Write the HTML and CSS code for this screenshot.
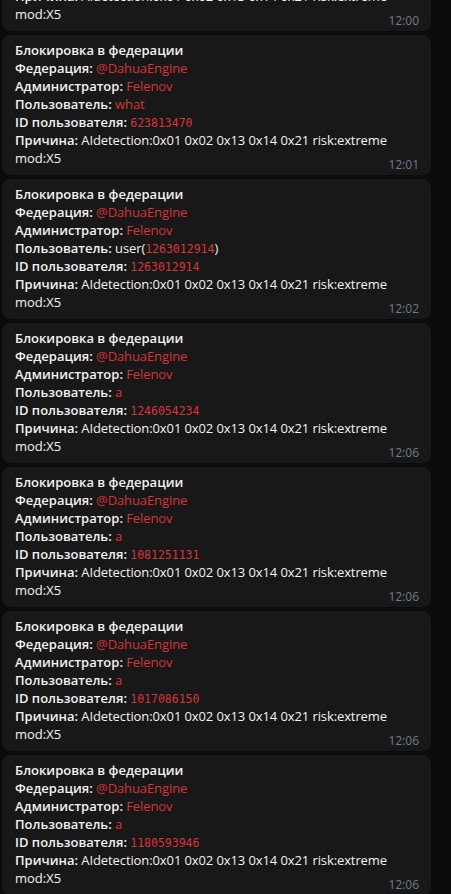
FILE: index.html
```html
<!DOCTYPE html>
<html>
<head>
<meta charset="utf-8">
<title>Федерация</title>
<link rel="stylesheet" href="styles.css">
</head>

<body>
<div class="feed">

    <div class="msg">
        <div class="line b">Блокировка в федерации</div>
        <div class="line"><b>Федерация:</b> <span class="red">@DahuaEngine</span></div>
        <div class="line"><b>Администратор:</b> <span class="red">Felenov</span></div>
        <div class="line"><b>Пользователь:</b> <span class="red">a</span></div>
        <div class="line"><b>ID пользователя:</b> <code>1125430012</code></div>
        <div class="line"><b>Причина:</b> AIdetection:0x01 0x02 0x13 0x14 0x21 risk:extreme</div>
        <div class="last"><span>mod:X5</span><span class="time">12:00</span></div>
    </div>

    <div class="msg">
        <div class="line b">Блокировка в федерации</div>
        <div class="line"><b>Федерация:</b> <span class="red">@DahuaEngine</span></div>
        <div class="line"><b>Администратор:</b> <span class="red">Felenov</span></div>
        <div class="line"><b>Пользователь:</b> <span class="red">what</span></div>
        <div class="line"><b>ID пользователя:</b> <code>623813470</code></div>
        <div class="line"><b>Причина:</b> AIdetection:0x01 0x02 0x13 0x14 0x21 risk:extreme</div>
        <div class="last"><span>mod:X5</span><span class="time">12:01</span></div>
    </div>

    <div class="msg">
        <div class="line b">Блокировка в федерации</div>
        <div class="line"><b>Федерация:</b> <span class="red">@DahuaEngine</span></div>
        <div class="line"><b>Администратор:</b> <span class="red">Felenov</span></div>
        <div class="line"><b>Пользователь:</b> user(<code>1263012914</code>)</div>
        <div class="line"><b>ID пользователя:</b> <code>1263012914</code></div>
        <div class="line"><b>Причина:</b> AIdetection:0x01 0x02 0x13 0x14 0x21 risk:extreme</div>
        <div class="last"><span>mod:X5</span><span class="time">12:02</span></div>
    </div>

    <div class="msg">
        <div class="line b">Блокировка в федерации</div>
        <div class="line"><b>Федерация:</b> <span class="red">@DahuaEngine</span></div>
        <div class="line"><b>Администратор:</b> <span class="red">Felenov</span></div>
        <div class="line"><b>Пользователь:</b> <span class="red">a</span></div>
        <div class="line"><b>ID пользователя:</b> <code>1246054234</code></div>
        <div class="line"><b>Причина:</b> AIdetection:0x01 0x02 0x13 0x14 0x21 risk:extreme</div>
        <div class="last"><span>mod:X5</span><span class="time">12:06</span></div>
    </div>

    <div class="msg">
        <div class="line b">Блокировка в федерации</div>
        <div class="line"><b>Федерация:</b> <span class="red">@DahuaEngine</span></div>
        <div class="line"><b>Администратор:</b> <span class="red">Felenov</span></div>
        <div class="line"><b>Пользователь:</b> <span class="red">a</span></div>
        <div class="line"><b>ID пользователя:</b> <code>1081251131</code></div>
        <div class="line"><b>Причина:</b> AIdetection:0x01 0x02 0x13 0x14 0x21 risk:extreme</div>
        <div class="last"><span>mod:X5</span><span class="time">12:06</span></div>
    </div>

    <div class="msg">
        <div class="line b">Блокировка в федерации</div>
        <div class="line"><b>Федерация:</b> <span class="red">@DahuaEngine</span></div>
        <div class="line"><b>Администратор:</b> <span class="red">Felenov</span></div>
        <div class="line"><b>Пользователь:</b> <span class="red">a</span></div>
        <div class="line"><b>ID пользователя:</b> <code>1017086150</code></div>
        <div class="line"><b>Причина:</b> AIdetection:0x01 0x02 0x13 0x14 0x21 risk:extreme</div>
        <div class="last"><span>mod:X5</span><span class="time">12:06</span></div>
    </div>

    <div class="msg">
        <div class="line b">Блокировка в федерации</div>
        <div class="line"><b>Федерация:</b> <span class="red">@DahuaEngine</span></div>
        <div class="line"><b>Администратор:</b> <span class="red">Felenov</span></div>
        <div class="line"><b>Пользователь:</b> <span class="red">a</span></div>
        <div class="line"><b>ID пользователя:</b> <code>1180593946</code></div>
        <div class="line"><b>Причина:</b> AIdetection:0x01 0x02 0x13 0x14 0x21 risk:extreme</div>
        <div class="last"><span>mod:X5</span><span class="time">12:06</span></div>
    </div>

</div>
</body>
</html>
```

FILE: styles.css
```css
/* общий фон чата */
body {
    margin: 0;
    background-color: #0b0b0b;
    color: #f2f2f2;
    font-family: 'Open Sans', 'Noto Sans', sans-serif;
    font-size: 13px;
    overflow: hidden;
}

/* лента прокручена: первое сообщение видно только снизу */
.feed {
    margin-top: -109px;
    padding: 0 20px 0 2px;
}

/* пузырь сообщения */
.msg {
    background-color: #181818;
    border-radius: 8px;
    padding: 6px 12px 8px 13px;
    margin-bottom: 4px;
}

.line {
    height: 18px;
    line-height: 18px;
    white-space: nowrap;
    letter-spacing: -0.1px;
}

.b,
.line b {
    font-weight: 600;
    letter-spacing: 0;
}

.red {
    color: #d8323c;
}

code {
    font-family: 'DejaVu Sans Mono', 'Liberation Mono', monospace;
    font-size: 11.5px;
    line-height: 1;
    letter-spacing: 0;
    color: #dc343c;
}

/* последняя строка со временем */
.last {
    display: flex;
    justify-content: space-between;
    align-items: flex-end;
    height: 18px;
    line-height: 18px;
}

.time {
    font-size: 12px;
    line-height: 14px;
    margin-bottom: -5px;
    color: #6d7c8a;
}
```
